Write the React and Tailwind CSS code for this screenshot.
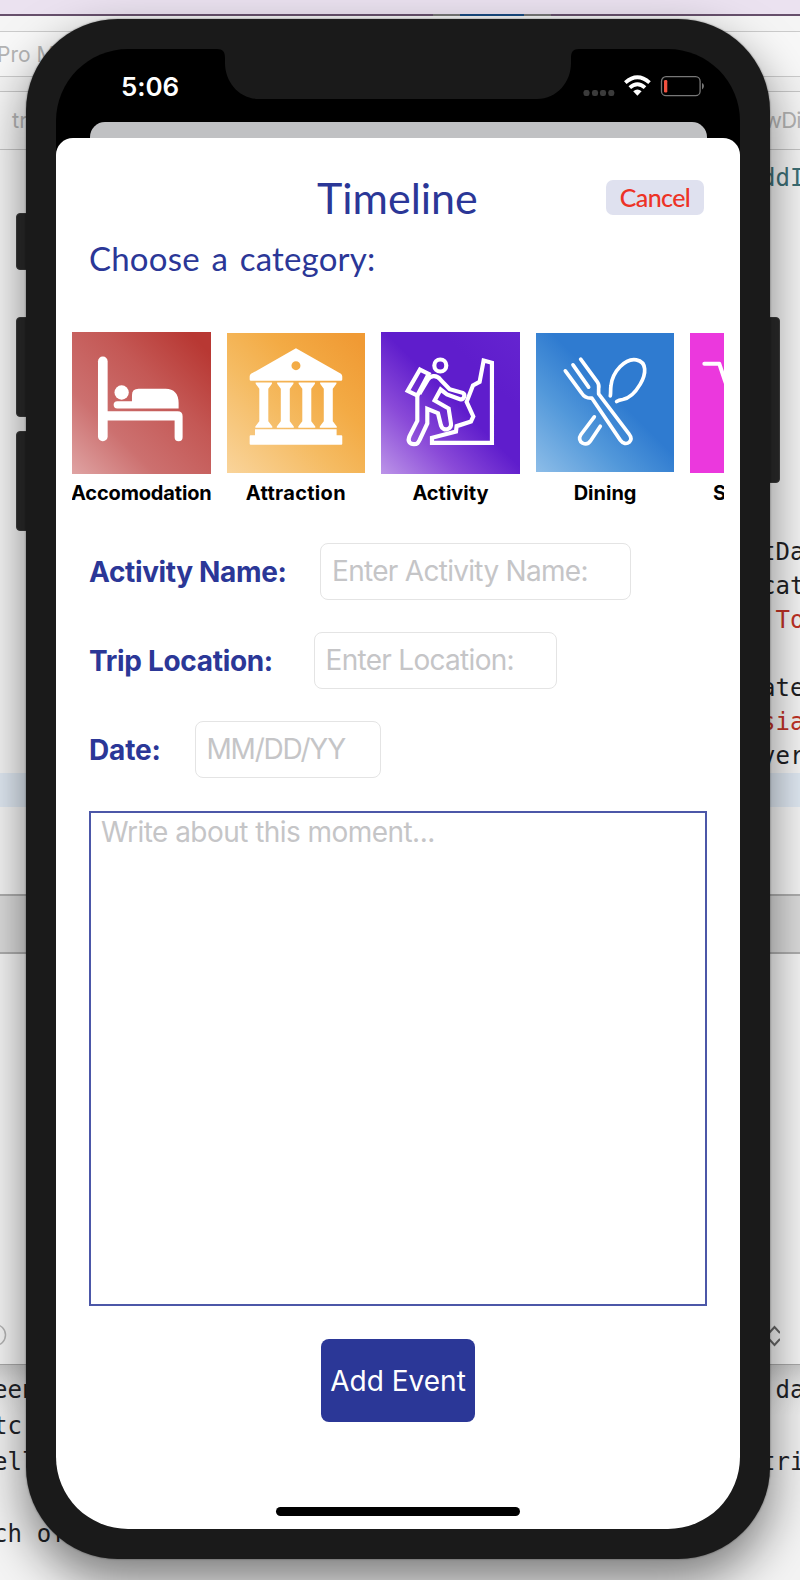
import React from "react";

function CodeRow({ left = "", right = "", className = "" }) {
  return (
    <div className={`flex h-[34px] shrink-0 items-center justify-between whitespace-pre font-['DejaVu_Sans_Mono',monospace] text-[24px] leading-none tracking-[0.1px] ${className}`}>
      <span className="-ml-[7px]">{left}</span>
      <span className="w-[39px]">{right}</span>
    </div>
  );
}

function EditorBackdrop() {
  return (
    <div className="flex h-[1580px] w-[800px] flex-col overflow-hidden bg-[#f2f2f2]">
      <div className="h-[14px] shrink-0 bg-[#ebe2f0]" />
      <div className="flex h-[2px] shrink-0 bg-[#67506c]">
        <div className="ml-[433px] w-[27px] bg-[#777777]" />
        <div className="w-[64px] bg-[#174a80]" />
        <div className="w-[27px] bg-[#777777]" />
      </div>
      <div className="h-[16px] shrink-0 border-b border-[#cbcbcb] bg-[#f5f5f5]" />
      <div className="flex h-[45px] shrink-0 items-center border-b border-[#cbcbcb] bg-[#f8f8f8] pt-[2px] font-['Inter',sans-serif] text-[21px] text-[#b4b4b4]">
        <span className="-ml-[3px] whitespace-nowrap">Pro M</span>
      </div>
      <div className="h-[15px] shrink-0 border-b border-[#c6c6c6] bg-[#f3f3f3]" />
      <div className="flex h-[58px] shrink-0 items-center justify-between border-b border-[#c6c6c6] bg-[#f6f6f6] font-['Inter',sans-serif] text-[22px] text-[#b4b4b4]">
        <span className="pl-[12px]">tr</span>
        <span className="w-[36px] whitespace-nowrap tracking-[-0.8px]">wDi</span>
      </div>
      <div className="flex h-[744px] shrink-0 flex-col bg-[#f7f7f7] pt-[11px] text-[#1f1f24]">
        <CodeRow right="ddI" className="text-[#3e7077]" />
        <div className="h-[340px] shrink-0" />
        <CodeRow right="tDa" />
        <CodeRow right="cat" />
        <CodeRow right=" To" className="text-[#c13327]" />
        <div className="h-[34px] shrink-0" />
        <CodeRow right="ate" />
        <CodeRow right="sia" className="text-[#c13327]" />
        <CodeRow right="ver" />
        <div className="h-[34px] shrink-0 bg-[#e2ebf5]" />
      </div>
      <div className="h-[60px] shrink-0 border-y-2 border-[#b0b0b0] bg-[#dedede]" />
      <div className="flex h-[411px] shrink-0 items-end justify-between border-b border-[#ababab] bg-[#f7f7f7] pb-[17px]">
        <svg className="h-[24px] w-[8px]" viewBox="0 0 8 24" fill="none">
          <circle cx="-5" cy="12" r="10.5" stroke="#b5b5b5" strokeWidth="1.5" />
        </svg>
        <svg className="mr-[20px] h-[22px] w-[16px]" viewBox="0 0 16 22" fill="none" stroke="#696969" strokeWidth="2">
          <path d="M5 8L10.5 2L16 8M5 14L10.5 20L16 14" />
        </svg>
      </div>
      <div className="flex flex-1 flex-col gap-[2px] bg-[linear-gradient(180deg,#cecece_0px,#e6e6e6_18px,#f4f4f4_50px)] pt-[8px] text-[#1f2328]">
        <CodeRow left="een" right=" da" />
        <CodeRow left="tc" />
        <CodeRow left="ell" right="tri" />
        <CodeRow />
        <CodeRow left="ch of" />
      </div>
    </div>
  );
}

function StatusBar() {
  return (
    <div className="flex h-[73px] shrink-0 items-start justify-between">
      <span className="pl-[65px] pt-[24px] font-['Inter',sans-serif] text-[26px] font-semibold leading-[28px] tracking-[-0.1px] text-white">5:06</span>
      <div className="flex pr-[35px] pt-[26px]">
        <svg className="h-[22px] w-[122px]" viewBox="0 0 122 22">
          <g fill="#3b3b3b">
            <rect x="0.5" y="15" width="6" height="6" rx="2.2" />
            <rect x="9" y="15" width="6" height="6" rx="2.2" />
            <rect x="17" y="15" width="6" height="6" rx="2.2" />
            <rect x="25.300" y="15" width="6" height="6" rx="2.2" />
          </g>
          <g fill="none" stroke="#fff" strokeWidth="3.800">
            <path d="M42.300 7.700Q54.400 -3 66.500 7.700" />
            <path d="M46.800 12.600Q54.400 5.800 62 12.600" />
          </g>
          <path d="M50.200 16.200Q54.400 13 58.600 16.200L54.400 20.700Z" fill="#fff" />
          <rect x="78.500" y="1.700" width="38.600" height="19" rx="4.500" fill="none" stroke="#777" strokeWidth="1.300" />
          <rect x="81" y="5" width="3.300" height="12.500" rx="1.200" fill="#f0513f" />
          <path d="M119 8Q120.800 8.500 121 11Q120.800 13.500 119 14.500Z" fill="#777" />
        </svg>
      </div>
    </div>
  );
}

function BedIcon() {
  return (
    <svg className="h-full w-full" viewBox="37 37 416 425" fill="#fff">
      <rect x="115" y="110" width="29" height="254" rx="14" />
      <path d="M130 274H354Q369 274 369 289V352A12 12 0 0 1 345 352V302H130Z" />
      <circle cx="186" cy="218" r="21.500" />
      <path d="M173 244H217V226Q217 207 237 207H318Q356 208 357 249V266H173A11 11 0 0 1 173 244Z" />
    </svg>
  );
}

function MuseumIcon() {
  return (
    <svg className="h-full w-full" viewBox="501 40 416 419" fill="#fff">
      <path fillRule="evenodd" d="M708 85L843 162Q847 165 847 170V179Q847 183 843 183H573Q569 183 569 179V170Q569 165 573 162ZM708 124A13.500 13.500 0 1 0 708 151A13.500 13.500 0 1 0 708 124Z" />
      {[0, 64.500, 129, 193.500].map((x) => (
        <path key={x} transform={`translate(${x} 0)`} d="M587 188H636V192L625 207V304L637 320V324H586V320L598 304V207L587 192Z" />
      ))}
      <path d="M585 328H830V346H844Q847 346 847 349V372Q847 375 844 375H572Q569 375 569 372V349Q569 346 572 346H585Z" />
    </svg>
  );
}

function HikerIcon() {
  return (
    <svg className="h-full w-full" viewBox="33 37 416 425" fill="none" stroke="#fff" strokeWidth="12.500" strokeLinejoin="miter">
      <circle cx="211" cy="137" r="18" />
      <path d="M150 149L176 162L142 227L113 213Z" />
      <path d="M142 223V303L119 348C111 365 120 373 132 373C143 373 145 368 149 360L172 311V267L204 280L213 317C217 329 226 330 232 328C240 326 244 320 243 311L236 266L194 242L212 209L231 224L270 238C282 241 288 224 278 219L239 208L212 180C207 173 202 168 190 169C182 170 177 174 173 180L148 222" />
      <path d="M341 122L366 129V369H186V354L258 335L260 319L303 305L310 290L290 246L309 197L329 186Z" />
    </svg>
  );
}

function CutleryIcon() {
  return (
    <svg className="h-full w-full" viewBox="498 42 416 416" fill="none" stroke="#fff" strokeWidth="11" strokeLinecap="round" strokeLinejoin="round">
      <path d="M586 155L635 222C641 232 650 238 666 237L751 363C759 374 770 376 778 369C786 361 784 353 777 344L686 224V209C688 201 688 197 682 188L632 120" />
      <path d="M609 137L656 204" />
      <path d="M721 230C723 220 721 212 723 200C727 158 766 116 799 122C832 128 829 164 811 195C794 224 778 238 758 241C750 242 746 243 740 247" />
      <path d="M673 293L633 346C626 356 628 366 638 372C647 376 656 373 661 366L691 321" />
    </svg>
  );
}

function CartIcon() {
  return (
    <svg className="h-full w-full" viewBox="960 40 416 419" fill="none" stroke="#fff" strokeWidth="12" strokeLinecap="round" strokeLinejoin="round">
      <path d="M1003 132H1048L1064 180L1110 310H1260L1300 180H1064" />
      <circle cx="1135" cy="350" r="18" />
      <circle cx="1240" cy="350" r="18" />
    </svg>
  );
}

const categories = [
  { name: "Accomodation", Icon: BedIcon, label: "tracking-[-0.150px]", tile: "h-[142px] bg-[linear-gradient(45deg,#dfa3a3_0%,#cc706f_30%,#c45855_62%,#b83833_92%)]" },
  { name: "Attraction", Icon: MuseumIcon, label: "tracking-[0.3px]", tile: "h-[140px] bg-[linear-gradient(45deg,#f9d49b_0%,#f5bb62_40%,#f3ab45_65%,#f09a34_95%)]" },
  { name: "Activity", Icon: HikerIcon, label: "", tile: "h-[142px] bg-[linear-gradient(45deg,#bc94e8_0%,#8a4ad8_28%,#5f1dcc_52%,#5f1dcc_72%,#6524d0_100%)]" },
  { name: "Dining", Icon: CutleryIcon, label: "", tile: "h-[139px] bg-[linear-gradient(45deg,#8dbde8_0%,#5298da_32%,#2f7bd0_56%,#2f7bd0_100%)]" },
  { name: "Shopping", Icon: CartIcon, label: "", tile: "h-[140px] bg-[#eb38dd]" },
];

function CategoryStrip() {
  return (
    <div className="ml-[16px] mt-[53px] flex h-[178px] w-[652px] shrink-0 gap-[16px] overflow-hidden">
      {categories.map(({ name, Icon, tile, label }) => (
        <div key={name} className="flex w-[138.600px] shrink-0 flex-col items-center">
          <div className="flex h-[142px] w-full shrink-0 items-center">
            <div className={`w-full ${tile}`}>
              <Icon />
            </div>
          </div>
          <span className={`mt-[5px] whitespace-nowrap text-[20px] font-bold leading-[28px] text-black ${label}`}>{name}</span>
        </div>
      ))}
    </div>
  );
}

function Field({ label, labelClass, placeholder, boxClass, textClass }) {
  return (
    <div className="flex h-[57px] items-center">
      <span className={`shrink-0 whitespace-nowrap pt-[2px] text-[28px] font-bold leading-[34px] text-[#2b3797] ${labelClass}`}>{label}</span>
      <div className={`flex h-full items-center rounded-[8px] border border-[#e4e4e4] pl-[11px] text-[28px] text-[#c5c5c7] ${boxClass}`}>
        <span className={`whitespace-nowrap ${textClass}`}>{placeholder}</span>
      </div>
    </div>
  );
}

function TimelineSheet() {
  return (
    <div className="flex flex-1 flex-col rounded-t-[17px] bg-white font-['Inter',sans-serif]">
      <div className="flex h-[83px] shrink-0 items-start justify-between pl-[261px] pr-[36px]">
        <h1 className="mt-[34px] whitespace-nowrap font-['Lato',sans-serif] text-[43px] leading-[52px] text-[#2b3797]">Timeline</h1>
        <button className="mt-[42px] flex h-[35px] w-[98px] items-center justify-center rounded-[7px] bg-[#dfe1ef] font-['Lato',sans-serif] text-[25px] font-medium leading-none tracking-[-0.6px] text-[#ed3326]">Cancel</button>
      </div>
      <h2 className="ml-[33px] mt-[16px] h-[42px] shrink-0 whitespace-nowrap font-['Lato',sans-serif] text-[33px] leading-[42px] tracking-[0.2px] text-[#2b3797] [word-spacing:3px]">Choose a category:</h2>
      <CategoryStrip />
      <div className="ml-[33px] mt-[33px] flex shrink-0 flex-col gap-[32px]">
        <Field label="Activity Name:" labelClass="w-[231px] tracking-[-0.360px]" placeholder="Enter Activity Name:" boxClass="w-[311px]" textClass="tracking-[-0.7px]" />
        <Field label="Trip Location:" labelClass="w-[224.500px] tracking-[-0.320px]" placeholder="Enter Location:" boxClass="w-[243px]" textClass="tracking-[-0.7px]" />
        <Field label="Date:" labelClass="w-[105.500px] tracking-[-0.150px]" placeholder="MM/DD/YY" boxClass="w-[186px]" textClass="tracking-[-1.2px]" />
      </div>
      <div className="ml-[33px] mt-[33px] h-[495px] w-[618px] shrink-0 border-2 border-[#4c57a8] pl-[10px] pt-[2px] text-[28px] leading-[34px] text-[#c5c5c7]">
        <span className="tracking-[-0.55px]">Write about this moment...</span>
      </div>
      <button className="ml-[265px] mt-[33px] h-[83px] w-[154px] shrink-0 whitespace-nowrap rounded-[8px] bg-[#2b3797] pt-px text-[28px] text-white">
        <span className="tracking-[0.02px]">Add Event</span>
      </button>
      <div className="ml-[220px] mt-[85px] h-[9px] w-[244px] shrink-0 rounded-full bg-black" />
    </div>
  );
}

function Phone() {
  return (
    <div className="absolute left-[26px] top-[18.500px] h-[1540.500px] w-[744px] rounded-[92px] bg-[#1a1a1a] p-[30px] shadow-[0_22px_50px_rgba(0,0,0,0.5),0_0_2px_rgba(0,0,0,0.5)]">
      <div className="relative flex h-full flex-col overflow-hidden rounded-[72px] bg-black">
        <StatusBar />
        <div className="mx-auto h-[16px] w-[617px] shrink-0 rounded-t-[15px] bg-[#c0c1c3]" />
        <TimelineSheet />
        <svg className="absolute left-[161px] top-0 h-[50px] w-[362px]" viewBox="0 0 362 50" fill="#1a1a1a">
          <path d="M0 0C6 0 8 3 8 9V14C8 33 22 50 42 50H320C340 50 354 33 354 14V9C354 3 356 0 362 0Z" />
        </svg>
      </div>
    </div>
  );
}

export default function App() {
  return (
    <div className="relative h-[1580px] w-[800px] overflow-hidden">
      <EditorBackdrop />
      <div className="absolute left-[15.500px] top-[213px] h-[57px] w-[14px] rounded-[4px] border border-[#3d3d3d] bg-[#2b2b2b]" />
      <div className="absolute left-[15.500px] top-[317px] h-[100px] w-[14px] rounded-[4px] border border-[#3d3d3d] bg-[#2b2b2b]" />
      <div className="absolute left-[15.500px] top-[431px] h-[100px] w-[14px] rounded-[4px] border border-[#3d3d3d] bg-[#2b2b2b]" />
      <div className="absolute left-[766px] top-[317px] h-[166px] w-[14px] rounded-[4px] border border-[#3d3d3d] bg-[#2b2b2b]" />
      <Phone />
    </div>
  );
}
